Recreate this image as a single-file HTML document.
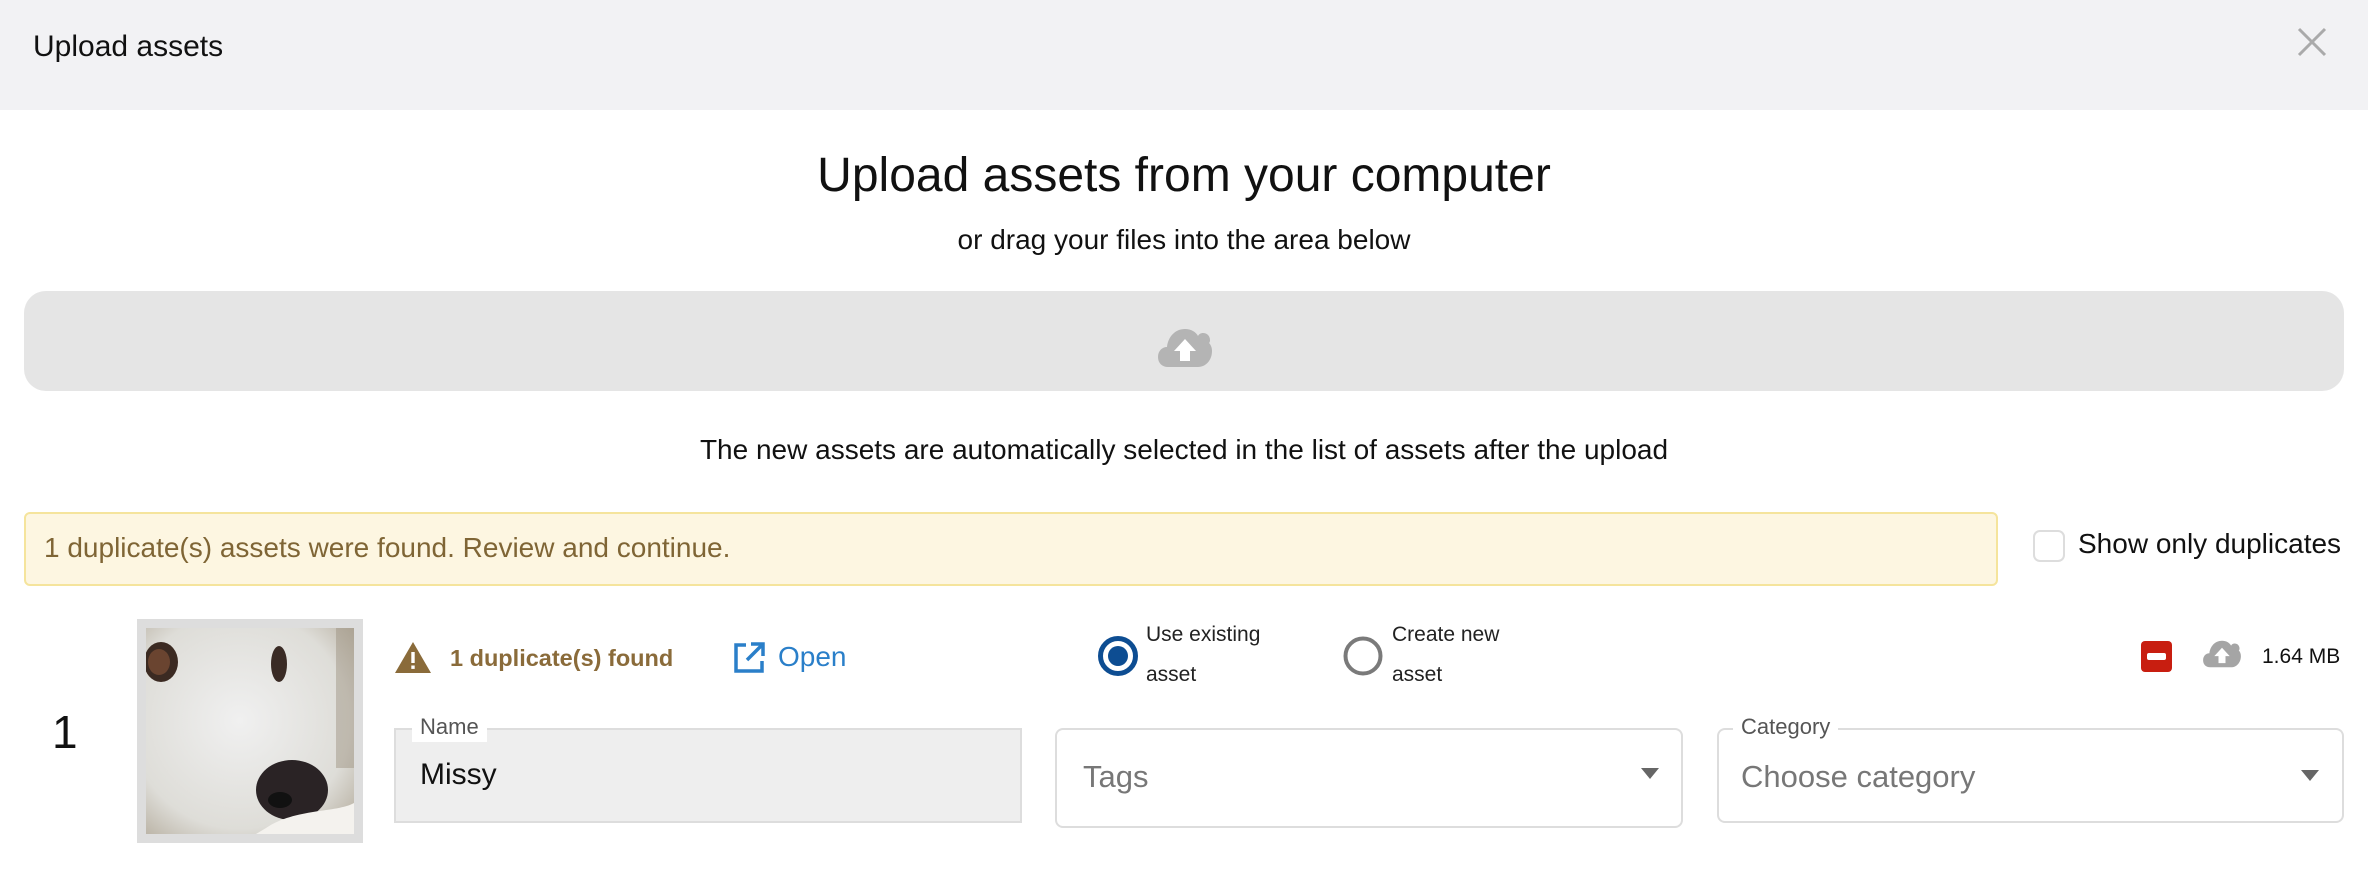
<!DOCTYPE html>
<html><head><meta charset="utf-8"><style>
*{margin:0;padding:0;box-sizing:border-box}
body{width:2368px;height:896px;background:#fff;font-family:"Liberation Sans",sans-serif;color:#111;position:relative;overflow:hidden}
.a{position:absolute;white-space:nowrap}
</style></head><body>
<div class="a" style="left:0;top:0;width:2368px;height:110px;background:#f2f2f4"></div>
<div class="a" style="left:33px;top:29px;font-size:30px;line-height:36px">Upload assets</div>
<svg class="a" style="left:2296px;top:26px" width="32" height="32" viewBox="0 0 32 32"><path d="M3 3L29 29M29 3L3 29" stroke="#aaa" stroke-width="3"/></svg>

<div class="a" style="left:0;width:2368px;top:148px;text-align:center;font-size:48px;line-height:56px">Upload assets from your computer</div>
<div class="a" style="left:0;width:2368px;top:223px;text-align:center;font-size:28px;line-height:34px">or drag your files into the area below</div>
<div class="a" style="left:24px;top:291px;width:2320px;height:100px;background:#e5e5e5;border-radius:22px"></div>
<svg class="a" style="left:1158px;top:328px" width="54" height="40" viewBox="0 0 54 40"><path d="M10 39C4 39 0 35 0 29C0 23 4 19 9 19C10 9 17 1 27 1C33 1 38 4 40 8C41 6 43 5 45 5C49 5 52 8 52 12C52 13 52 14 51 15C53 17 54 20 54 23C54 32 48 39 40 39Z" fill="#b4b4b4"/><path d="M27 11L16 23H22V33H32V23H38Z" fill="#fff"/></svg>
<div class="a" style="left:0;width:2368px;top:433px;text-align:center;font-size:28px;line-height:34px">The new assets are automatically selected in the list of assets after the upload</div>

<div class="a" style="left:24px;top:512px;width:1974px;height:74px;background:#fdf6e1;border:2px solid #f5e49c;border-radius:6px"></div>
<div class="a" style="left:44px;top:531px;font-size:28px;line-height:34px;color:#7f6535">1 duplicate(s) assets were found. Review and continue.</div>
<div class="a" style="left:2033px;top:530px;width:32px;height:32px;border:2px solid #ddd;border-radius:7px"></div>
<div class="a" style="left:2078px;top:527px;font-size:28px;line-height:34px">Show only duplicates</div>

<div class="a" style="left:52px;top:706px;font-size:46px;line-height:52px">1</div>
<div class="a" style="left:137px;top:619px;width:226px;height:224px;background:#ddd"></div>
<svg class="a" style="left:146px;top:628px" width="208" height="206" viewBox="0 0 208 206"><defs><radialGradient id="g" cx="0.45" cy="0.45" r="0.75"><stop offset="0" stop-color="#f0f0f0"/><stop offset="0.7" stop-color="#deddd8"/><stop offset="1" stop-color="#b5ad9e"/></radialGradient></defs><rect width="208" height="206" fill="url(#g)"/><rect x="190" y="0" width="18" height="140" fill="#9a8f7c" opacity=".45"/><ellipse cx="15" cy="34" rx="17" ry="20" fill="#3b2a22"/><ellipse cx="13" cy="34" rx="11" ry="13" fill="#6a4430"/><ellipse cx="133" cy="36" rx="8" ry="18" fill="#3a2b25"/><ellipse cx="146" cy="162" rx="36" ry="30" fill="#2a2325"/><ellipse cx="134" cy="172" rx="12" ry="8" fill="#111"/><path d="M120 200C150 180 190 185 208 175V206H110Z" fill="#f4f2ee"/></svg>

<svg class="a" style="left:395px;top:642px" width="36" height="31" viewBox="0 0 36 31"><path d="M18 0L36 31H0Z" fill="#8a6b3a"/><rect x="16.3" y="10" width="3.4" height="11" fill="#fff"/><rect x="16.3" y="23.5" width="3.4" height="3.4" fill="#fff"/></svg>
<div class="a" style="left:450px;top:643px;font-size:23.5px;line-height:30px;font-weight:bold;color:#8a6b3a">1 duplicate(s) found</div>
<svg class="a" style="left:733px;top:642px" width="32" height="32" viewBox="0 0 32 32"><path d="M13 3H3V29H29V19" fill="none" stroke="#2a7fc9" stroke-width="3.5"/><path d="M18 2H30V14M30 2L14 18" fill="none" stroke="#2a7fc9" stroke-width="3.5"/></svg>
<div class="a" style="left:778px;top:640px;font-size:28px;line-height:34px;color:#2a7fc9">Open</div>

<svg class="a" style="left:1096px;top:634px" width="44" height="44"><circle cx="22" cy="22" r="17.5" fill="none" stroke="#0d4d92" stroke-width="5"/><circle cx="22" cy="22" r="10" fill="#0d4d92"/></svg>
<div class="a" style="left:1146px;top:615px;font-size:21px;line-height:40px;color:#222">Use existing<br>asset</div>
<svg class="a" style="left:1341px;top:634px" width="44" height="44"><circle cx="22" cy="22" r="17.5" fill="none" stroke="#7a7a7a" stroke-width="4"/></svg>
<div class="a" style="left:1392px;top:615px;font-size:21px;line-height:40px;color:#222">Create new<br>asset</div>

<div class="a" style="left:2141px;top:641px;width:31px;height:31px;background:#c81e10;border-radius:4px"></div>
<div class="a" style="left:2147px;top:653px;width:19px;height:7px;background:#fff;border-radius:2px"></div>
<svg class="a" style="left:2202px;top:640px" width="40" height="28" viewBox="0 0 54 40"><path d="M10 39C4 39 0 35 0 29C0 23 4 19 9 19C10 9 17 1 27 1C33 1 38 4 40 8C41 6 43 5 45 5C49 5 52 8 52 12C52 13 52 14 51 15C53 17 54 20 54 23C54 32 48 39 40 39Z" fill="#a5a5a5"/><path d="M27 11L16 23H22V33H32V23H38Z" fill="#fff"/></svg>
<div class="a" style="left:2262px;top:643px;font-size:21px;line-height:27px">1.64 MB</div>

<div class="a" style="left:394px;top:728px;width:628px;height:95px;background:#eee;border:2px solid #ddd"></div>
<div class="a" style="left:412px;top:712px;padding:0 8px;background:#fff;font-size:22px;line-height:30px;color:#555">Name</div>
<div class="a" style="left:420px;top:757px;font-size:30px;line-height:36px;color:#111">Missy</div>

<div class="a" style="left:1055px;top:728px;width:628px;height:100px;border:2px solid #ddd;border-radius:8px;background:#fff"></div>
<div class="a" style="left:1083px;top:759px;font-size:31px;line-height:36px;color:#777">Tags</div>
<div class="a" style="left:1641px;top:768px;width:0;height:0;border-left:9px solid transparent;border-right:9px solid transparent;border-top:11px solid #666"></div>

<div class="a" style="left:1717px;top:728px;width:627px;height:95px;border:2px solid #ddd;border-radius:8px;background:#fff"></div>
<div class="a" style="left:1733px;top:712px;padding:0 8px;background:#fff;font-size:22px;line-height:30px;color:#555">Category</div>
<div class="a" style="left:1741px;top:759px;font-size:31px;line-height:36px;color:#777">Choose category</div>
<div class="a" style="left:2301px;top:770px;width:0;height:0;border-left:9px solid transparent;border-right:9px solid transparent;border-top:11px solid #666"></div>
</body></html>
